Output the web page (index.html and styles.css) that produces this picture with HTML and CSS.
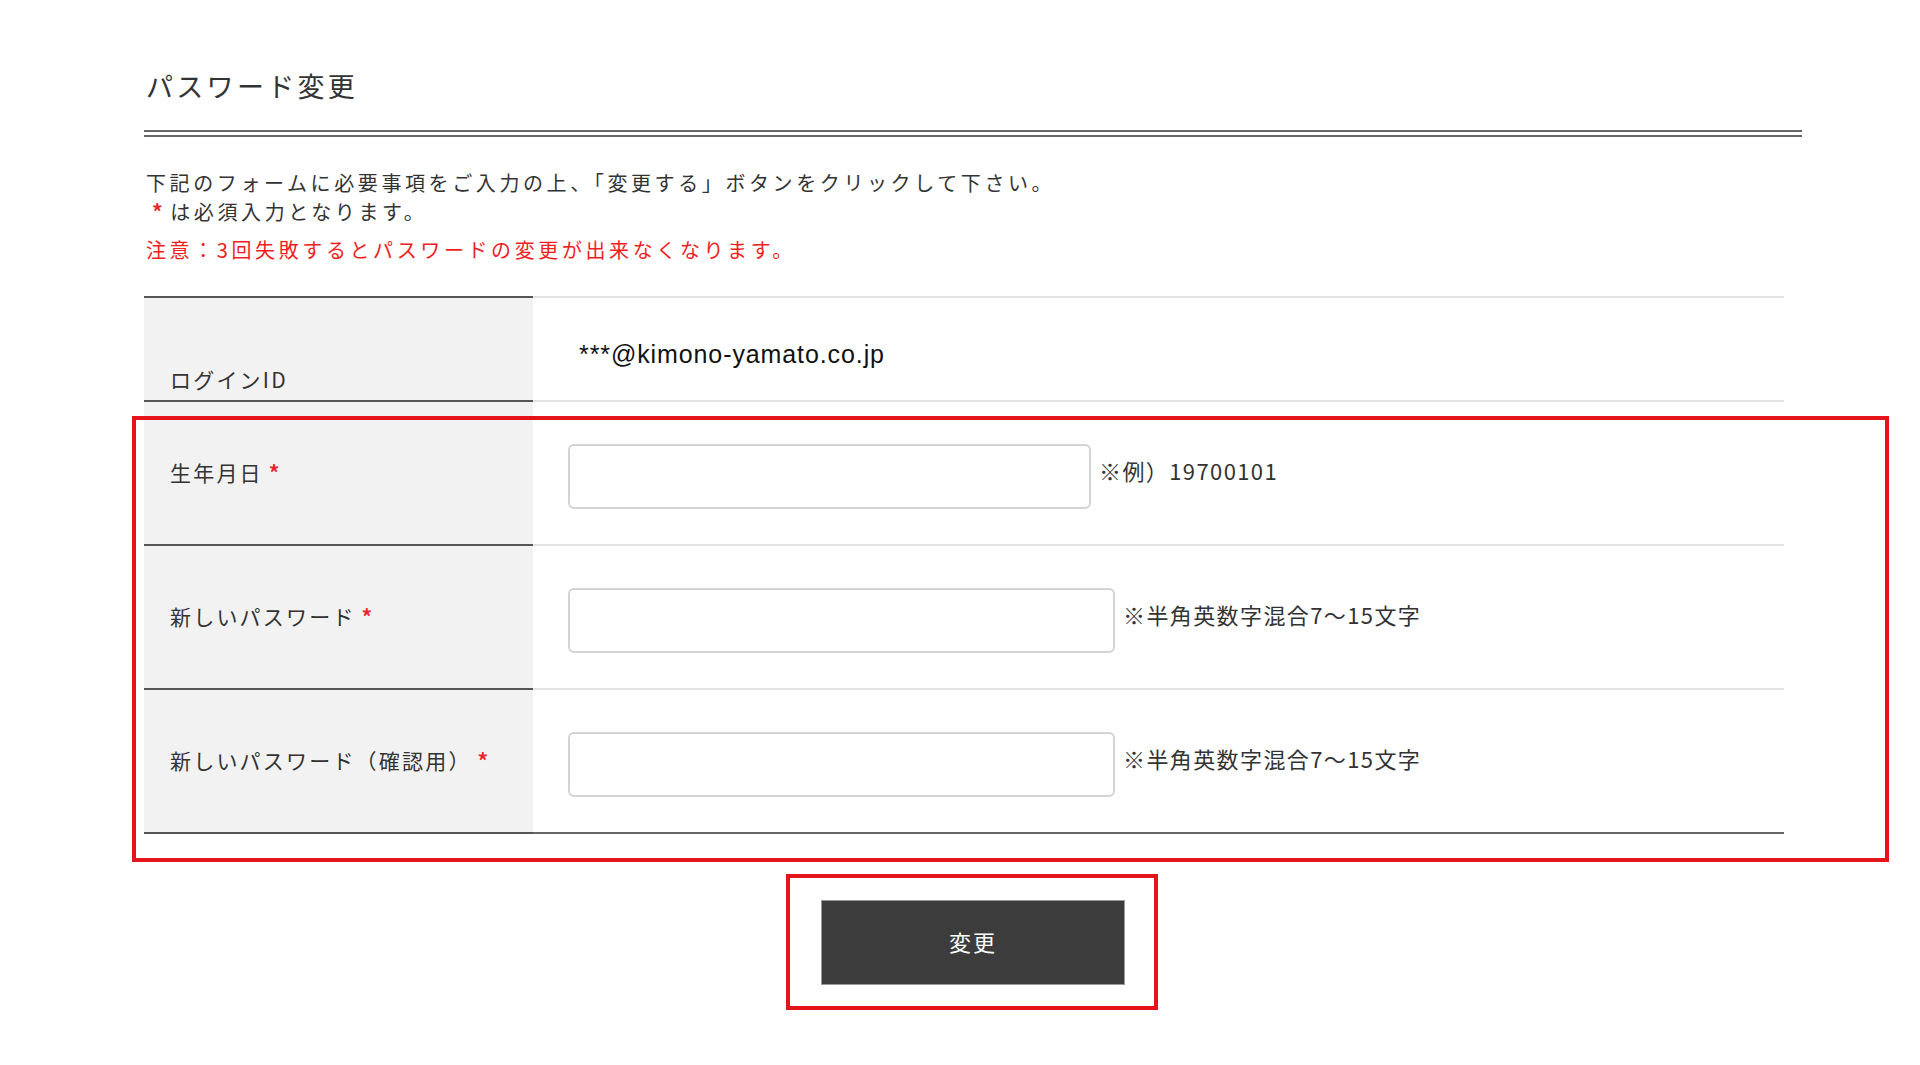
FILE: index.html
```html
<!DOCTYPE html>
<html lang="ja">
<head>
<meta charset="utf-8">
<title>パスワード変更</title>
<link rel="stylesheet" href="styles.css">
</head>
<body>
<div class="page">
  <h1 class="title">パスワード変更</h1>
  <div class="intro">
    <p class="lead">下記のフォームに必要事項をご入力の上、「変更する」ボタンをクリックして下さい。<br><span class="req req-lead">*</span>は必須入力となります。</p>
    <p class="warn">注意：3回失敗するとパスワードの変更が出来なくなります。</p>
  </div>

  <div class="form-table">
    <div class="row row-first">
      <div class="th th-bottom">ログインID</div>
      <div class="td td-login">***@kimono-yamato.co.jp</div>
    </div>
    <div class="row">
      <div class="th">生年月日<span class="req">*</span></div>
      <div class="td">
        <input class="field field-birth" type="text">
        <span class="hint">※例）19700101</span>
      </div>
    </div>
    <div class="row">
      <div class="th">新しいパスワード<span class="req">*</span></div>
      <div class="td">
        <input class="field field-pass" type="password">
        <span class="hint">※半角英数字混合7〜15文字</span>
      </div>
    </div>
    <div class="row row-last">
      <div class="th">新しいパスワード（確認用）<span class="req">*</span></div>
      <div class="td">
        <input class="field field-pass" type="password">
        <span class="hint">※半角英数字混合7〜15文字</span>
      </div>
    </div>
  </div>

  <div class="actions">
    <button class="submit" type="button">変更</button>
  </div>

  <div class="mark mark-form"></div>
  <div class="mark mark-button"></div>
</div>
</body>
</html>
```

FILE: styles.css
```css
html, body {
  margin: 0;
  padding: 0;
  background: #ffffff;
}

body {
  font-family: "Noto Sans CJK JP", "Noto Sans", sans-serif;
  color: #333333;
}

.page {
  position: relative;
  margin-left: 144px;
  width: 1658px;
}

.title {
  margin: 0;
  padding: 65px 0 24px 2px;
  font-size: 27px;
  line-height: 41px;
  font-weight: normal;
  letter-spacing: 3.3px;
  color: #333333;
  border-bottom: 7px double #666666;
}

.intro {
  padding-top: 32px;
}

.intro p {
  margin: 0;
  font-size: 20px;
  line-height: 28px;
  letter-spacing: 3.6px;
  padding-left: 2px;
}

.lead {
  color: #333333;
}

.warn {
  margin-top: 10px !important;
  color: #f01e1e;
}

.req {
  color: #e8262b;
  margin-left: 6px;
  font-size: 21px;
  font-weight: bold;
}

.req-lead {
  margin-left: 6px;
  margin-right: 4px;
}

.form-table {
  margin-top: 32px;
  width: 1640px;
}

.row {
  display: grid;
  grid-template-columns: 389px 1251px;
  height: 144px;
}

.row-first {
  height: 106px;
}

.th {
  display: flex;
  align-items: center;
  background: #f2f2f2;
  border-bottom: 2px solid #555555;
  padding-left: 26px;
  padding-bottom: 3px;
  font-size: 21px;
  line-height: 30px;
  letter-spacing: 2.2px;
  color: #333333;
}

.row-first .th {
  border-top: 2px solid #555555;
}

.th-bottom {
  align-items: flex-end;
  padding-bottom: 6px;
}

.td {
  display: flex;
  align-items: center;
  border-bottom: 2px solid #e2e2e2;
  padding-left: 35px;
}

.row-first .td {
  border-top: 2px solid #e2e2e2;
}

.row-last .td {
  border-bottom-color: #666666;
}

.td-login {
  padding-left: 46px;
  padding-top: 10px;
  font-family: "Liberation Sans", Arial, sans-serif;
  font-size: 25px;
  line-height: 30px;
  color: #111111;
  letter-spacing: 0.9px;
}

.field {
  box-sizing: border-box;
  height: 65px;
  margin: 7px 0 0 0;
  border: 2px solid #d4d4d4;
  border-radius: 6px;
  background: #ffffff;
  padding: 0 10px;
  font-size: 20px;
  outline: none;
}

.field-birth {
  width: 523px;
}

.field-pass {
  width: 547px;
}

.hint {
  margin: 0 0 6px 8px;
  font-size: 22px;
  line-height: 30px;
  letter-spacing: 1.4px;
  color: #333333;
}

.actions {
  display: flex;
  justify-content: center;
  padding-top: 66px;
  padding-bottom: 40px;
}

.submit {
  width: 304px;
  height: 85px;
  padding: 0 0 4px 0;
  background: #3c3c3c;
  border: 1px solid #9a9a9a;
  color: #ffffff;
  font-family: "Noto Sans CJK JP", "Noto Sans", sans-serif;
  font-size: 22px;
  letter-spacing: 2px;
  cursor: pointer;
}

.mark {
  position: absolute;
  box-sizing: border-box;
  border: 4px solid #e5141b;
  pointer-events: none;
}

.mark-form {
  left: -12px;
  top: 416px;
  width: 1757px;
  height: 446px;
}

.mark-button {
  left: 642px;
  top: 874px;
  width: 372px;
  height: 136px;
}
```
